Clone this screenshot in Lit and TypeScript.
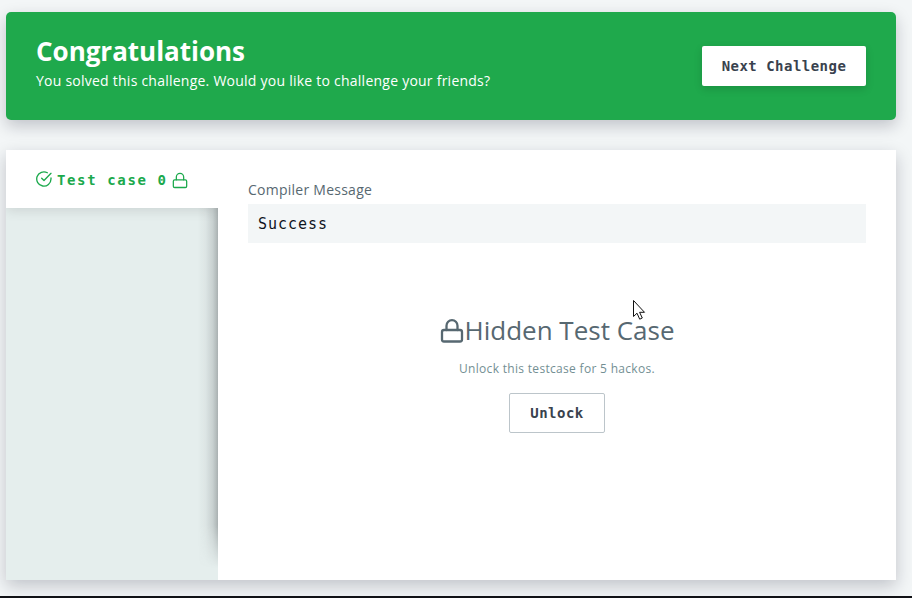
import { LitElement, html, css, svg } from "lit";
import { customElement, property } from "lit/decorators.js";

@customElement("lock-icon")
class LockIcon extends LitElement {
  @property({ type: Number }) weight = 2.3;
  static styles = css`
    :host { display: block; }
    svg { display: block; width: 100%; height: 100%; }
  `;
  render() {
    return html`<svg viewBox="0 0 24 24" fill="none" stroke="currentColor" stroke-width=${this.weight} stroke-linecap="round" stroke-linejoin="round">
      ${svg`<rect x="2" y="11" width="20" height="11.5" rx="2"></rect><path d="M6.5 11V6.7a5.5 5.5 0 0 1 11 0V11"></path>`}
    </svg>`;
  }
}

@customElement("app-root")
class AppRoot extends LitElement {
  static styles = css`
    :host {
      display: flex;
      flex-direction: column;
      box-sizing: border-box;
      position: relative;
      height: 598px;
      width: 912px;
      padding: 12px 16px 0 6px;
      gap: 30px;
      overflow: hidden;
      background: #f3f6f7;
      font-family: "Open Sans", sans-serif;
      color: #576871;
    }
    .banner {
      box-sizing: border-box;
      height: 108px;
      flex: none;
      display: flex;
      align-items: center;
      justify-content: space-between;
      padding: 0 30px;
      border-radius: 5px;
      background: #1fa94c;
      color: #fff;
      box-shadow: 0 6px 16px rgba(20, 20, 40, 0.22);
    }
    .banner-text { padding-bottom: 8px; }
    h1 { margin: 0; font-size: 26px; line-height: 36px; font-weight: 700; letter-spacing: -0.02px; }
    .sub { margin: 0; padding-top: 1px; font-size: 14px; line-height: 22px; letter-spacing: 0.24px; }
    button {
      box-sizing: border-box;
      height: 40px;
      padding: 0;
      border: none;
      border-radius: 2px;
      background: #fff;
      color: #39424e;
      font: 700 14px "DejaVu Sans Mono", monospace;
      letter-spacing: 0.48px;
    }
    .next { width: 164px; box-shadow: 0 3px 9px rgba(0, 0, 0, 0.14); }
    .panel {
      height: 430px;
      flex: none;
      display: grid;
      grid-template-columns: 212px 1fr;
      background: #fff;
      box-shadow: 0 6px 16px rgba(20, 20, 40, 0.22);
    }
    .side { display: flex; flex-direction: column; background: #e5eeed; overflow: hidden; }
    .tab {
      box-sizing: border-box;
      height: 58px;
      flex: none;
      display: flex;
      align-items: center;
      padding-left: 30px;
      background: #fff;
      color: #1ba94c;
      font: 700 14px "DejaVu Sans Mono", monospace;
      letter-spacing: 1.63px;
      box-shadow: 0 2px 12px rgba(0, 0, 0, 0.12);
      z-index: 1;
    }
    .check { width: 16px; height: 16px; margin-right: 5px; flex: none; }
    .tab span { white-space: pre; padding-top: 2px; }
    .tab lock-icon { width: 16px; height: 17px; margin: 2px 0 0 4px; }
    .rest { flex: 1; display: flex; justify-content: flex-end; }
    .edge {
      width: 20px;
      height: 360px;
      background: linear-gradient(to left, rgba(80, 85, 88, 0.4), rgba(80, 85, 88, 0.2) 25%, rgba(80, 85, 88, 0.06) 60%, transparent);
      mask-image: linear-gradient(to bottom, #000 88%, transparent);
    }
    .body { display: flex; flex-direction: column; padding: 30px; }
    .label { font-size: 14px; line-height: 20px; height: 24px; letter-spacing: 0.25px; }
    .output {
      box-sizing: border-box;
      height: 39px;
      flex: none;
      padding: 1px 0 0 10px;
      background: #f3f6f7;
      color: #0e141e;
      font: 15px/39px "DejaVu Sans Mono", monospace;
      letter-spacing: 0.95px;
    }
    .locked { display: flex; flex-direction: column; align-items: center; padding-top: 69px; }
    .title { display: flex; align-items: center; height: 38px; font-size: 26px; white-space: nowrap; }
    .title span { padding-bottom: 2px; }
    .title lock-icon { width: 24px; height: 26px; margin-right: 1px; }
    .hint { margin-top: 9px; height: 20px; font-size: 12px; line-height: 20px; color: #738f93; letter-spacing: 0.31px; }
    .unlock { width: 96px; margin-top: 14px; border: 1px solid #bcc5ca; }
    .cursor { position: absolute; left: 632px; top: 299px; width: 14px; height: 22px; }
    .bar { position: absolute; left: 0; right: 0; bottom: 0; height: 2px; background: #111216; }
  `;

  render() {
    return html`
      <section class="banner">
        <div class="banner-text">
          <h1>Congratulations</h1>
          <p class="sub">You solved this challenge. Would you like to challenge your friends?</p>
        </div>
        <button class="next">Next Challenge</button>
      </section>
      <section class="panel">
        <div class="side">
          <div class="tab">
            <svg class="check" viewBox="0 0 24 24" fill="none" stroke="currentColor" stroke-width="2" stroke-linecap="round" stroke-linejoin="round">
              <path d="M22.5 10.5V12A10.7 10.7 0 1 1 17 2.6"></path>
              <path d="M22.5 3.5L12 14.3 8.5 10.8"></path>
            </svg>
            <span>Test case 0</span>
            <lock-icon .weight=${1.9}></lock-icon>
          </div>
          <div class="rest"><div class="edge"></div></div>
        </div>
        <div class="body">
          <div class="label">Compiler Message</div>
          <div class="output">Success</div>
          <div class="locked">
            <div class="title"><lock-icon></lock-icon><span>Hidden Test Case</span></div>
            <div class="hint">Unlock this testcase for 5 hackos.</div>
            <button class="unlock">Unlock</button>
          </div>
        </div>
      </section>
      <svg class="cursor" viewBox="0 0 14 22">
        <path d="M1.5 1.5V17.5L5 14.2 7.7 20.2 10.3 19 7.6 13.3H12.5Z" fill="#fff" stroke="#111" stroke-width="1"></path>
      </svg>
      <div class="bar"></div>
    `;
  }
}
